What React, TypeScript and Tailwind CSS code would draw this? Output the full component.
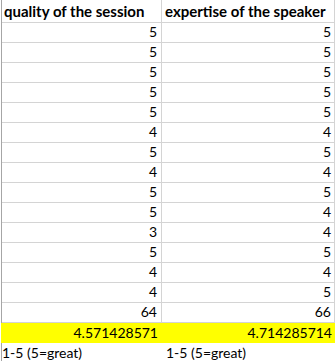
const quality = [5, 5, 5, 5, 5, 4, 5, 4, 5, 5, 3, 5, 4, 4];
const expertise = [5, 5, 5, 5, 5, 4, 5, 4, 5, 4, 4, 5, 4, 5];

function NumRow({ a, b }: { a: string | number; b: string | number }) {
  return (
    <div className="flex h-[20px] border-b border-[#d4d4d4]">
      <div className="w-[160px] border-r border-[#d4d4d4] flex items-end justify-end pr-[4px] pb-[2px] leading-[16px]">
        {a}
      </div>
      <div className="w-[173px] border-r border-[#d4d4d4] flex items-end justify-end pr-[3px] pb-[2px] leading-[16px]">
        {b}
      </div>
    </div>
  );
}

export default function App() {
  return (
    <div className="w-[336px] h-[361px] overflow-hidden bg-white text-black font-['Lato','Open_Sans',sans-serif] text-[14px]">
      <div className="ml-px w-[334px] border-l border-[#a6a6a6]">
        {/* header */}
        <div className="flex h-[23px] border-b border-[#d4d4d4] font-bold text-[15px]">
          <div className="w-[160px] border-r border-[#d4d4d4] flex items-end pl-[2px] pb-[2px] leading-[18px]">
            quality of the session
          </div>
          <div className="w-[173px] border-r border-[#d4d4d4] flex items-end pl-[3px] pb-[2px] leading-[18px]">
            expertise of the speaker
          </div>
        </div>

        {quality.map((q, i) => (
          <NumRow key={i} a={q} b={expertise[i]} />
        ))}
        <NumRow a={64} b={66} />

        {/* averages */}
        <div className="flex h-[20px] bg-[#ffff00] -ml-px">
          <div className="w-[161px] flex items-end justify-end pr-[4px] pb-[2px] leading-[16px]">
            4.571428571
          </div>
          <div className="w-[173px] flex items-end justify-end pr-[3px] pb-[2px] leading-[16px]">
            4.714285714
          </div>
        </div>

        <div className="flex h-[20px]">
          <div className="w-[160px] flex items-end pl-[0px] pb-[2px] leading-[16px]">1-5 (5=great)</div>
          <div className="w-[173px] flex items-end pl-[4px] pb-[2px] leading-[16px]">1-5 (5=great)</div>
        </div>
      </div>
    </div>
  );
}
